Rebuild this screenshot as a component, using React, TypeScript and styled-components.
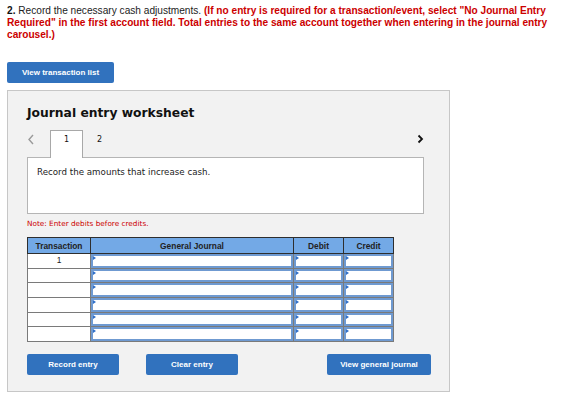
import * as React from 'react'
import styled, { createGlobalStyle } from 'styled-components'

const GlobalStyle = createGlobalStyle`
  body {
    margin: 0;
    background: #fff;
    font-family: "Liberation Sans", Arial, sans-serif;
  }
`

const Style = {
  Page: styled.div`
    padding: 5px 7px 0;
    width: 568px;
    box-sizing: border-box;
  `,
  Instructions: styled.p`
    margin: 0;
    width: 552px;
    font-size: 10.15px;
    line-height: 12px;
    color: #222;
  `,
  Number: styled.b`
    color: #111;
  `,
  Warning: styled.b`
    color: #cc0000;
  `,
  BlueButton: styled.button<{ $width: number }>`
    width: ${(p) => p.$width}px;
    height: 21px;
    padding: 0;
    border: none;
    border-radius: 2px;
    background: #3172be;
    color: #fff;
    font-family: "Liberation Sans", Arial, sans-serif;
    font-weight: bold;
    font-size: 8px;
    cursor: pointer;
  `,
  TopActions: styled.div`
    margin-top: 20px;
  `,
  Panel: styled.section`
    margin-top: 7px;
    width: 443px;
    height: 302px;
    box-sizing: border-box;
    padding: 13px 19px 0;
    background: #f2f2f2;
    border: 1px solid #c7c7c7;
  `,
  Title: styled.h2`
    margin: 0;
    font-family: "DejaVu Sans", Verdana, sans-serif;
    font-size: 12.3px;
    font-weight: bold;
    line-height: 18px;
    color: #111;
  `,
  TabRow: styled.div`
    margin-top: 8px;
    width: 397px;
    display: flex;
    align-items: flex-start;
  `,
  Arrow: styled.span`
    width: 23px;
    height: 26px;
    display: flex;
    align-items: flex-start;
    padding-top: 4px;
    box-sizing: border-box;
  `,
  Tab: styled.div<{ $active?: boolean }>`
    position: relative;
    z-index: 1;
    width: 33px;
    height: 28px;
    margin-bottom: -1px;
    box-sizing: border-box;
    padding-top: 4px;
    text-align: center;
    font-family: "DejaVu Sans", Verdana, sans-serif;
    font-size: 8px;
    color: #111;
    background: ${(p) => (p.$active ? '#fff' : 'transparent')};
    border: 1px solid ${(p) => (p.$active ? '#a8a8a8' : 'transparent')};
    border-bottom: none;
  `,
  NextArrow: styled.span`
    margin-left: auto;
    padding-top: 4px;
    display: flex;
  `,
  Prompt: styled.div`
    width: 397px;
    height: 57px;
    box-sizing: border-box;
    padding: 9px 9px;
    background: #fff;
    border: 1px solid #b5b5b5;
    font-family: "DejaVu Sans", Verdana, sans-serif;
    font-size: 8.7px;
    color: #222;
  `,
  Note: styled.div`
    margin-top: 5px;
    font-family: "DejaVu Sans", Verdana, sans-serif;
    font-size: 7.3px;
    color: #cc0000;
  `,
  Table: styled.table`
    margin-top: 9px;
    width: 366px;
    table-layout: fixed;
    border-collapse: collapse;
    background: #fff;
    border: 1px solid #777;
  `,
  HeadRow: styled.tr`
    height: 16px;
  `,
  HeadCell: styled.th<{ $width: number }>`
    width: ${(p) => p.$width}px;
    padding: 0;
    background: #73a9e6;
    border: 1px solid #2e2e2e;
    font-size: 8.4px;
    font-weight: bold;
    color: #222;
  `,
  Row: styled.tr`
    height: 14.7px;
  `,
  Cell: styled.td`
    padding: 0;
    border: 1px solid #7a7a7a;
    text-align: center;
    font-size: 8.4px;
    line-height: 13px;
    color: #222;
    vertical-align: top;
  `,
  Input: styled.div`
    position: relative;
    height: 13.7px;
    box-sizing: border-box;
    border: 2px solid #6f9ad1;
    background: #fff;

    &::before {
      content: '';
      position: absolute;
      top: 0;
      left: 0;
      border-top: 2px solid transparent;
      border-bottom: 2px solid transparent;
      border-left: 3px solid #2f6fc8;
    }
  `,
  BottomActions: styled.div`
    margin-top: 12px;
    width: 404px;
    display: flex;
    gap: 27px;

    & > :last-child {
      margin-left: auto;
    }
  `,
}

const ChevronLeft = () => (
  <svg width="8" height="11" viewBox="0 0 8 11">
    <path d="M6 1 L2 5.5 L6 10" fill="none" stroke="#9a9a9a" strokeWidth="1.4" />
  </svg>
)

const ChevronRight = () => (
  <svg width="7" height="10" viewBox="0 0 7 10">
    <path d="M1.5 1.5 L5 5 L1.5 8.5" fill="none" stroke="#111" strokeWidth="1.8" />
  </svg>
)

const rows = ['1', '', '', '', '', '']

const App = () => {
  return (
    <Style.Page>
      <GlobalStyle />
      <Style.Instructions>
        <Style.Number>2.</Style.Number> Record the necessary cash adjustments.{' '}
        <Style.Warning>
          (If no entry is required for a transaction/event, select "No Journal Entry Required" in the
          first account field. Total entries to the same account together when entering in the journal
          entry carousel.)
        </Style.Warning>
      </Style.Instructions>

      <Style.TopActions>
        <Style.BlueButton $width={107}>View transaction list</Style.BlueButton>
      </Style.TopActions>

      <Style.Panel>
        <Style.Title>Journal entry worksheet</Style.Title>

        <Style.TabRow>
          <Style.Arrow>
            <ChevronLeft />
          </Style.Arrow>
          <Style.Tab $active>1</Style.Tab>
          <Style.Tab>2</Style.Tab>
          <Style.NextArrow>
            <ChevronRight />
          </Style.NextArrow>
        </Style.TabRow>

        <Style.Prompt>Record the amounts that increase cash.</Style.Prompt>

        <Style.Note>Note: Enter debits before credits.</Style.Note>

        <Style.Table>
          <thead>
            <Style.HeadRow>
              <Style.HeadCell $width={62}>Transaction</Style.HeadCell>
              <Style.HeadCell $width={202}>General Journal</Style.HeadCell>
              <Style.HeadCell $width={49}>Debit</Style.HeadCell>
              <Style.HeadCell $width={49}>Credit</Style.HeadCell>
            </Style.HeadRow>
          </thead>
          <tbody>
            {rows.map((label, i) => (
              <Style.Row key={`journal-row-${i}`}>
                <Style.Cell>{label}</Style.Cell>
                <Style.Cell>
                  <Style.Input />
                </Style.Cell>
                <Style.Cell>
                  <Style.Input />
                </Style.Cell>
                <Style.Cell>
                  <Style.Input />
                </Style.Cell>
              </Style.Row>
            ))}
          </tbody>
        </Style.Table>

        <Style.BottomActions>
          <Style.BlueButton $width={92}>Record entry</Style.BlueButton>
          <Style.BlueButton $width={92}>Clear entry</Style.BlueButton>
          <Style.BlueButton $width={104}>View general journal</Style.BlueButton>
        </Style.BottomActions>
      </Style.Panel>
    </Style.Page>
  )
}

export default App
